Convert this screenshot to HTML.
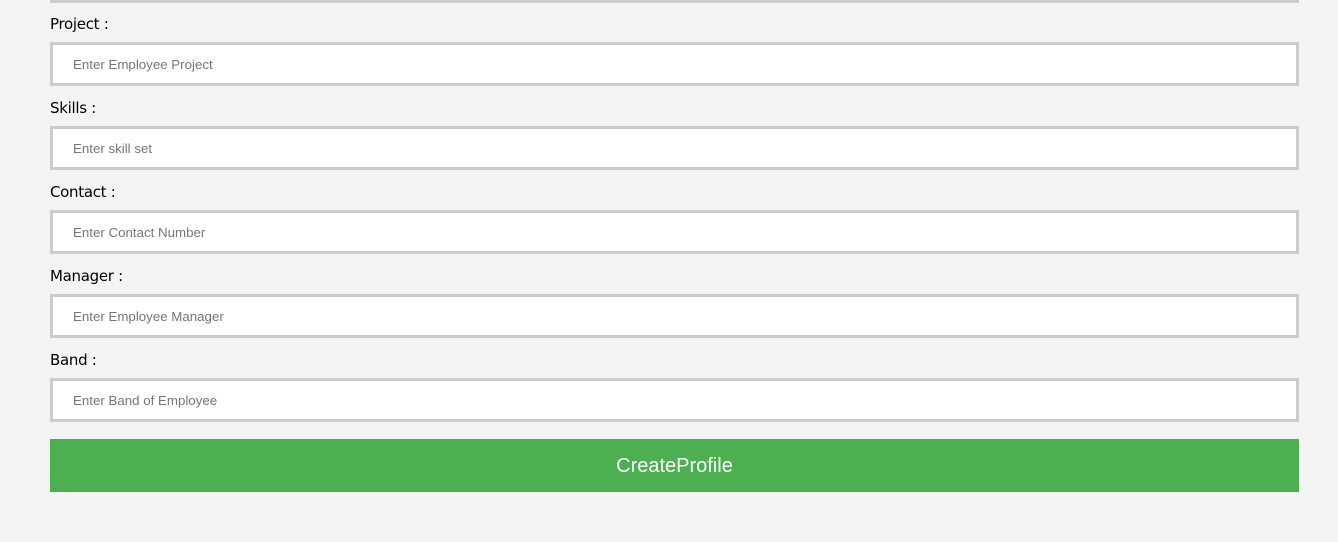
<!DOCTYPE html>
<html><head><style>
html,body{margin:0;padding:0;background:#f4f4f4;width:1338px;height:542px;overflow:hidden;position:relative}
.top{position:absolute;left:50px;top:0;width:1249px;height:3px;background:#ccc}
.lab{position:absolute;left:50px;font-family:"DejaVu Sans","Liberation Sans",sans-serif;font-size:15px;color:#000;letter-spacing:-0.3px}
.inp{position:absolute;left:50px;width:1243px;height:38px;border:3px solid #ccc;background:#fff;font-family:"Liberation Sans",sans-serif;font-size:13.3px;color:#757575;line-height:40px;padding-left:0}
.inp span{margin-left:20px}
.btn{position:absolute;left:50px;top:439px;width:1249px;height:53px;background:#4caf50;color:#fff;font-family:"Liberation Sans",sans-serif;font-size:20px;text-align:center;line-height:54px}
</style></head><body>
<div class="top"></div>
<div class="lab" style="top:15px">Project :</div>
<div class="inp" style="top:42px"><span>Enter Employee Project</span></div>
<div class="lab" style="top:99px">Skills :</div>
<div class="inp" style="top:126px"><span>Enter skill set</span></div>
<div class="lab" style="top:183px">Contact :</div>
<div class="inp" style="top:210px"><span>Enter Contact Number</span></div>
<div class="lab" style="top:267px">Manager :</div>
<div class="inp" style="top:294px"><span>Enter Employee Manager</span></div>
<div class="lab" style="top:351px">Band :</div>
<div class="inp" style="top:378px"><span>Enter Band of Employee</span></div>
<div class="btn">CreateProfile</div>
</body></html>
